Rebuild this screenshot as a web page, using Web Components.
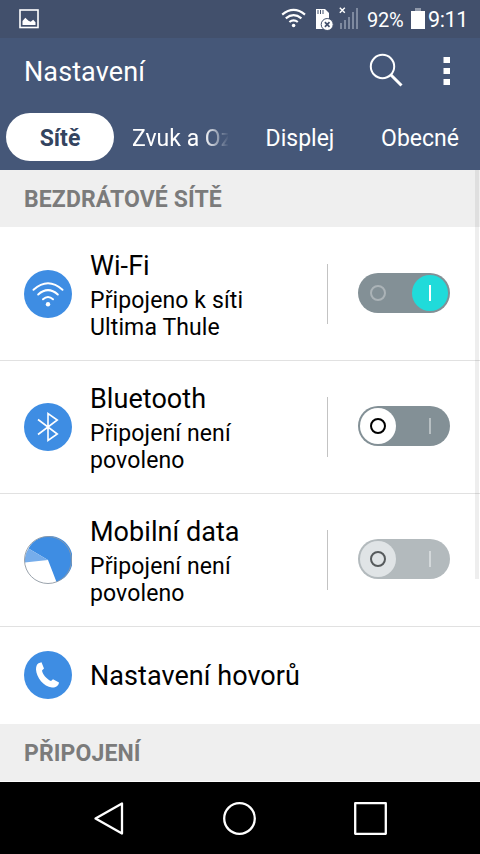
<!DOCTYPE html>
<html lang="cs">
<head>
<meta charset="utf-8">
<title>Nastavení</title>
<style>
html,body{margin:0;padding:0}
body{width:480px;height:854px;overflow:hidden;font-family:Roboto,"Noto Sans",sans-serif;background:#fff;color:#000}
</style>
</head>
<body>
<settings-screen></settings-screen>
<script>
const define = (name, html) => customElements.define(name, class extends HTMLElement {
  constructor() {
    super();
    this.attachShadow({ mode: 'open' }).innerHTML = html;
  }
});

define('status-bar', `<style>
:host{display:flex;align-items:center;height:38px;box-sizing:border-box;padding:0 12px 0 19px;background:#42506c;color:#fff;line-height:38px}
svg{display:block;flex:none}
.gap{flex:1}
.pct{margin-left:8px;width:37px;font-size:20px;letter-spacing:-.3px;white-space:nowrap;padding-top:1px}
.time{margin-left:3px;width:40px;font-size:21.5px;letter-spacing:-.4px;white-space:nowrap;padding-top:1px}
</style>
<svg width="20" height="38" viewBox="0 0 20 38"><rect x="1" y="10" width="18" height="17.5" fill="none" stroke="#fff" stroke-width="1.6"/><path d="M3.500 25v-4l2.800-3.300 3.200 3 2.200 1 2.500-2 2.300 2.500V25z" fill="#fff"/></svg>
<div class="gap"></div>
<svg width="78" height="38" viewBox="281 0 78 38" fill="none" stroke="#fff">
<path d="M282.200 14.600q11.400-9.400 22.800 0M285.800 18.400q7.800-6.400 15.600 0M289.400 22q4.200-3.400 8.400 0" stroke-width="2.200"/><circle cx="293.600" cy="25.500" r="1.800" fill="#fff" stroke="none"/>
<path d="M316 9h9l4 4v16h-13z" fill="#fff" stroke="none"/><path d="M318 10v4M320.500 10v4M323 10v4" stroke="#42506c"/>
<circle cx="327.200" cy="24.500" r="6" fill="#fff" stroke="#42506c"/><path d="m324.900 22.200 4.600 4.600m0-4.600-4.600 4.600" stroke="#42506c" stroke-width="1.700"/>
<path d="m339.800 7.800 5 5m0-5-5 5" stroke-width="1.400"/>
<path d="M341 29v-6M345 29v-9M349 29v-12M353 29v-17M357 29V8" stroke="#8994a8" stroke-width="1.700"/></svg>
<span class="pct">92%</span>
<svg width="14" height="38" viewBox="0 0 14 38" style="margin-left:7px"><path d="M4 8h6v3H4z" fill="#9099aa"/><path d="M0 11h14v18H0z" fill="#fff"/></svg>
<span class="time">9:11</span>`);

define('app-bar', `<style>
:host{display:flex;align-items:center;height:67px;box-sizing:border-box;padding-left:24px;background:#455778;color:#fff}
h1{margin:0;flex:1;font-size:27px;font-weight:400;line-height:32px;letter-spacing:.1px}
svg{display:block}
</style>
<h1><slot></slot></h1>
<svg width="120" height="67" viewBox="360 38 120 67" fill="none" stroke="#fff"><circle cx="382.500" cy="66.500" r="11.700" stroke-width="2"/><path d="m391 75 10.500 10.500" stroke-width="3"/><path d="M443.500 57h6.500v6h-6.500zM443.500 68h6.500v6h-6.500zM443.500 79h6.500v6h-6.500z" fill="#fff" stroke="none"/></svg>`);

define('tab-strip', `<style>
:host{display:grid;grid-template-columns:120px 120px 120px 120px;height:65px;background:#455778;color:#fff}
</style><slot></slot>`);

define('tab-item', `<style>
:host{display:flex;justify-content:center;font-size:23px;line-height:52px;padding:8px 6px 9px;white-space:nowrap}
span{display:block;flex:1;height:48px;text-align:center}
:host([selected]) span{background:#fff;color:#34445f;font-weight:700;border-radius:24px}
:host([clipped]) span{text-align:left;overflow:hidden;margin:0 6px;-webkit-mask-image:linear-gradient(90deg,#000 72px,transparent 97px)}
</style><span><slot></slot></span>`);

define('section-header', `<style>
:host{display:block;height:57px;box-sizing:border-box;padding-left:24px;background:#efefef;color:#7b7b7b;font-weight:700;font-size:23px;letter-spacing:.1px;line-height:59px;white-space:nowrap}
</style><slot></slot>`);

define('setting-row', `<style>
:host{display:flex;align-items:center;height:133px;box-sizing:border-box;border-bottom:1px solid #e1e1e1;padding:0 30px 0 24px}
:host([first]){height:134px;padding-top:1px}
:host([compact]){height:97px;border:0;padding-bottom:1px}
.text{flex:1;margin-left:18px;padding-top:3px;white-space:nowrap}
.title{font-size:27px;line-height:32px;letter-spacing:.05px}
.sub{font-size:23px;line-height:27px;margin-top:5px;letter-spacing:.12px}
:host([compact]) .sub{margin-top:2px}
.end{display:flex;align-items:center;box-sizing:border-box;margin-top:-1px;padding-bottom:2px}
:host(:not([compact])) .end{border-left:1px solid #c3c3c3;padding-left:30px;height:60px}
</style><slot name="icon"></slot><div class="text"><div class="title"><slot></slot></div><div class="sub"><slot name="summary"></slot></div></div><div class="end"><slot name="control"></slot></div>`);

define('toggle-switch', `<style>
:host{display:flex;align-items:center;justify-content:space-between;width:92px;height:40px;box-sizing:border-box;padding:2px;border-radius:20px;background:#839096;--ring:#000;--bar:#b7bfc2;--off:#fff;--on:transparent}
:host([on]){--ring:#abb3b7;--bar:#fff;--off:transparent;--on:#20dbda}
:host([disabled]){background:#b3babd;--ring:#565a5c;--bar:#d3d8da;--off:#e0e4e6}
i{display:flex;align-items:center;justify-content:center;width:36px;height:36px;border-radius:50%}
.off{background:var(--off)}.on{background:var(--on)}
.off::before{content:"";width:12px;height:12px;border:2px solid var(--ring);border-radius:50%}
.on::before{content:"";width:2px;height:16px;background:var(--bar)}
</style><i class="off"></i><i class="on"></i>`);

const glyphs = {
  wifi: '<circle cx="24" cy="24" r="24" fill="#3e8de3"/><g fill="none" stroke="#fff" stroke-width="2" stroke-linecap="round"><path d="M9.500 19.800q14.500-13 29 0M14.200 24.500q9.800-8.700 19.600 0M19 29.300q5-4.500 10 0"/></g><circle cx="24" cy="34.200" r="2.200" fill="#fff"/>',
  bluetooth: '<circle cx="24" cy="24" r="24" fill="#3e8de3"/><path d="M14 16.500 33.300 31 24 37.500V10.500L33.300 17 14 31.500" fill="none" stroke="#fff" stroke-width="1.600"/>',
  data: '<circle cx="24" cy="24" r="23.500" fill="#fff"/><path d="M24 24 4.500 12.500A23.500 23.500 0 1 1 32.500 45.900z" fill="#3e8de3"/><path d="M24 24 4.500 12.500A23.500 23.500 0 0 0 .7 26.500z" fill="#76adeb"/><circle cx="24" cy="24" r="23.500" fill="none" stroke="#8f98a3" stroke-width=".9"/>',
  phone: '<circle cx="24" cy="24" r="24" fill="#3e8de3"/><path d="M14.500 12.200 17.500 11.200 20 17.500 18 19.500C18.600 23.500 22.500 28 27 30L29 28.200 35 31.500C34.500 35 31.500 36.800 28 36.500C19.500 35.500 12.500 26.500 12 18.500C12 15.500 12.700 13.500 14.500 12.200z" fill="#fff"/>'
};
customElements.define('round-icon', class extends HTMLElement {
  constructor() {
    super();
    this.attachShadow({ mode: 'open' });
  }
  connectedCallback() {
    this.shadowRoot.innerHTML = `<style>:host{display:block;width:48px;height:48px}svg{display:block}</style><svg width="48" height="48" viewBox="0 0 48 48">${glyphs[this.getAttribute('name')]}</svg>`;
  }
});

define('scroll-thumb', `<style>:host{display:block;position:absolute;right:1px;top:0;width:4px;height:409px;background:rgba(0,0,0,.065)}</style>`);

define('nav-bar', `<style>
:host{display:block;height:72px;background:#000}
svg{display:block}
</style><svg width="480" height="72" viewBox="0 782 480 72" fill="none" stroke="#fff" stroke-width="2.300" stroke-linejoin="round"><path d="M95.500 818.500 122 803.500v30z"/><circle cx="239.500" cy="818.500" r="15.300"/><path d="M355.200 803.200h30.600v30.600h-30.600z"/></svg>`);

define('settings-screen', `<style>
:host{display:flex;flex-direction:column;width:480px;height:854px}
main{position:relative;box-sizing:border-box;height:612px;overflow:hidden;border-bottom:1px solid #fcfcfc}
</style>
<status-bar></status-bar>
<app-bar>Nastavení</app-bar>
<tab-strip><tab-item selected>Sítě</tab-item><tab-item clipped>Zvuk a Oz</tab-item><tab-item>Displej</tab-item><tab-item>Obecné</tab-item></tab-strip>
<main>
<section-header>BEZDRÁTOVÉ SÍTĚ</section-header>
<setting-row first><round-icon slot="icon" name="wifi"></round-icon>Wi-Fi<span slot="summary">Připojeno k síti<br>Ultima Thule</span><toggle-switch slot="control" on></toggle-switch></setting-row>
<setting-row><round-icon slot="icon" name="bluetooth"></round-icon>Bluetooth<span slot="summary">Připojení není<br>povoleno</span><toggle-switch slot="control"></toggle-switch></setting-row>
<setting-row><round-icon slot="icon" name="data"></round-icon>Mobilní data<span slot="summary">Připojení není<br>povoleno</span><toggle-switch slot="control" disabled></toggle-switch></setting-row>
<setting-row compact><round-icon slot="icon" name="phone"></round-icon>Nastavení hovorů</setting-row>
<section-header>PŘIPOJENÍ</section-header>
<scroll-thumb></scroll-thumb>
</main>
<nav-bar></nav-bar>`);
</script>
</body>
</html>
